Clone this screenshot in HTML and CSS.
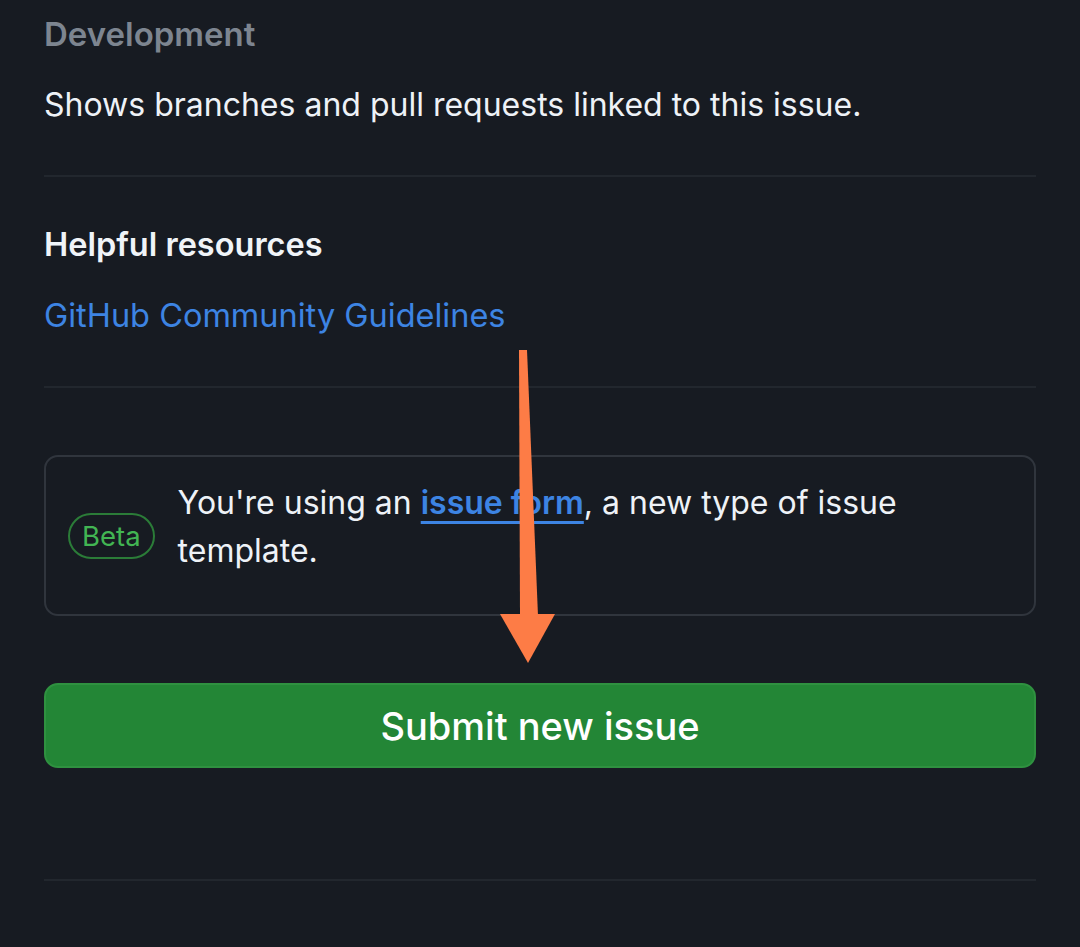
FILE: index.html
```html
<!DOCTYPE html>
<html lang="en">
<head>
<meta charset="utf-8">
<title>New issue</title>
<link rel="stylesheet" href="styles.css">
</head>
<body>
<div class="page">
  <section class="section">
    <h3 class="dev-title">Development</h3>
    <p class="dev-text">Shows branches and pull requests linked to this issue.</p>
  </section>
  <section class="section">
    <h3 class="res-title">Helpful resources</h3>
    <a class="res-link" href="#">GitHub Community Guidelines</a>
  </section>
  <div class="beta-box">
    <span class="badge">Beta</span>
    <p class="beta-text">You're using an <a class="beta-link" href="#">issue form</a>, a new type of issue template.</p>
  </div>
  <button class="submit">Submit new issue</button>
  <div class="bottom-rule"></div>
  <svg class="arrow" width="1080" height="947" viewBox="0 0 1080 947">
    <polygon points="519,350 527,350 538,616 520,616" fill="#fd7c46"/>
    <polygon points="500,614 555,614 528,663" fill="#fd7c46"/>
  </svg>
</div>
</body>
</html>
```
FILE: styles.css
```css
html, body {
  margin: 0;
  padding: 0;
  background: #171b22;
}
body {
  font-family: Inter, Roboto, "Noto Sans", sans-serif;
  color: #eef2f7;
}
.page {
  position: relative;
  width: 1080px;
  height: 947px;
  overflow: hidden;
  padding: 0 44px;
  box-sizing: border-box;
}
.section {
  border-bottom: 2px solid #22272e;
}
.section:first-child {
  padding-top: 12px;
  padding-bottom: 48px;
}
.section:nth-child(2) {
  padding-top: 46px;
  padding-bottom: 48px;
}
.dev-title {
  margin: 0;
  font-size: 33px;
  line-height: 44px;
  font-weight: 600;
  color: #7d8590;
}
.dev-text {
  margin: 27px 0 0;
  font-size: 32px;
  line-height: 44px;
  font-weight: 400;
}
.res-title {
  margin: 0;
  font-size: 32.5px;
  line-height: 44px;
  font-weight: 600;
  color: #f0f4f8;
}
.res-link {
  display: block;
  margin-top: 27px;
  font-size: 32.5px;
  line-height: 44px;
  color: #3d84e3;
  text-decoration: none;
}
.beta-box {
  margin-top: 67px;
  border: 2px solid #30353d;
  border-radius: 14px;
  padding: 22px 22px 21px;
  display: flex;
  align-items: center;
  gap: 23px;
}
.badge {
  flex: none;
  box-sizing: border-box;
  height: 46px;
  padding: 0 12px;
  border: 2px solid #2b7c38;
  border-radius: 23px;
  color: #42b553;
  font-size: 27.5px;
  line-height: 42px;
}
.beta-text {
  margin: 0 0 18px;
  max-width: 790px;
  font-size: 32px;
  line-height: 48px;
}
.beta-link {
  color: #3d84e3;
  font-weight: 600;
  text-decoration: underline;
  text-decoration-thickness: 3px;
  text-underline-offset: 7px;
}
.submit {
  display: block;
  width: 100%;
  margin-top: 67px;
  height: 85px;
  background: #238636;
  border: 2px solid #2f9140;
  border-radius: 14px;
  color: #ffffff;
  font-family: inherit;
  font-size: 38px;
  font-weight: 500;
}
.bottom-rule {
  margin-top: 111px;
  border-top: 2px solid #22272e;
}
.arrow {
  position: absolute;
  left: 0;
  top: 0;
  pointer-events: none;
}
```
